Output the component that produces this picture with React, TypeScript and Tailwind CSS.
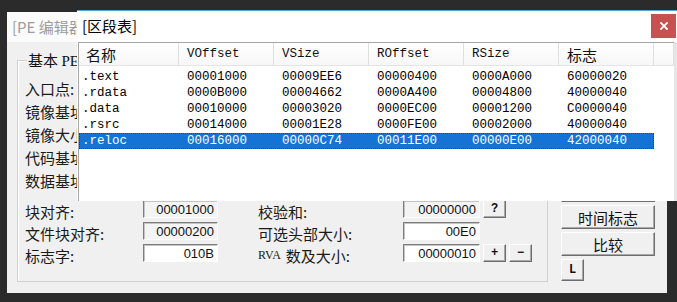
import React from "react";

const colW = ["w-[100px]", "w-[95px]", "w-[95px]", "w-[95px]", "w-[95px]", "w-[95px]"];

const rows = [
  [".text", "00001000", "00009EE6", "00000400", "0000A000", "60000020"],
  [".rdata", "0000B000", "00004662", "0000A400", "00004800", "40000040"],
  [".data", "00010000", "00003020", "0000EC00", "00001200", "C0000040"],
  [".rsrc", "00014000", "00001E28", "0000FE00", "00002000", "40000040"],
  [".reloc", "00016000", "00000C74", "00011E00", "00000E00", "42000040"],
];

const mono = "font-['Liberation_Mono','Noto_Sans_CJK_SC',monospace]";
const cjk = "font-['Noto_Sans_CJK_SC','Liberation_Sans',sans-serif]";

function Box({ value, gray }: { value: string; gray?: boolean }) {
  return (
    <div
      className={`h-[18px] flex items-center justify-end pr-[3px] border border-t-[#7d7d7d] border-l-[#7d7d7d] border-r-white border-b-white shadow-[inset_1px_1px_0_#c4c4c4] text-[13px] leading-none text-[#111] font-['Liberation_Sans',sans-serif] ${
        gray ? "bg-[#f4f4f4]" : "bg-white"
      } w-full`}
    >
      {value}
    </div>
  );
}

function SmallBtn({ label, tall }: { label: string; tall?: boolean }) {
  return (
    <div
      className={`w-[23px] ${tall ? "h-[22px]" : "h-[18px]"} flex items-center justify-center bg-[#f0f0f0] border border-t-white border-l-white border-r-[#6d6d6d] border-b-[#6d6d6d] shadow-[inset_-1px_-1px_0_#a8a8a8] text-[12px] leading-none text-[#111] font-['Liberation_Mono',monospace] font-bold`}
    >
      {label}
    </div>
  );
}

function BigBtn({ label }: { label: string }) {
  return (
    <div className={`w-[94px] h-[24px] flex items-center justify-center bg-[#f0f0f0] border border-t-white border-l-white border-r-[#6d6d6d] border-b-[#6d6d6d] shadow-[inset_-1px_-1px_0_#a8a8a8] text-[15px] leading-none text-[#111] ${cjk}`}>
      {label}
    </div>
  );
}

function TopRow({ label }: { label: string }) {
  return (
    <div className="flex h-[23px] items-center">
      <div className={`w-[118px] text-[15px] leading-none text-[#1a1a1a] ${cjk}`}>{label}</div>
      <div className="w-[75px]">
        <Box value="" />
      </div>
    </div>
  );
}

function BackWindow() {
  return (
    <div className="absolute left-[7px] top-[12px] w-[660px] h-[281px] bg-[#f0f0f0] flex flex-col">
      <div className={`h-[30px] bg-[#fbfbfb] flex items-center pl-[5px] text-[15px] text-[#9c9c9c] ${cjk}`}>
        [PE 编辑器]
      </div>
      <div className="flex flex-1 pl-[10px]">
        <div className="w-[531px] h-[222px] mt-[18px] border border-[#d0d0d0] shadow-[inset_1px_1px_0_#ffffff] flex flex-col pl-[7px]">
          <div className={`-mt-[11px] ml-[2px] w-fit px-[1px] bg-[#f0f0f0] text-[15px] leading-[20px] text-[#111] ${cjk}`}>
            基本 <span className="font-['Liberation_Serif',serif]">PE</span>
          </div>
          <div className="mt-[6px] flex flex-col">
            <TopRow label="入口点:" />
            <TopRow label="镜像基址:" />
            <TopRow label="镜像大小:" />
            <TopRow label="代码基址:" />
            <TopRow label="数据基址:" />
          </div>
          <div className="mt-[8px] flex flex-col">
            <div className="flex h-[22px] items-start">
              <div className={`w-[118px] h-[22px] flex items-center text-[15px] leading-none text-[#1a1a1a] ${cjk}`}>块对齐:</div>
              <div className="w-[75px]"><Box value="00001000" gray /></div>
              <div className={`ml-[40px] w-[145px] h-[22px] flex items-center text-[15px] leading-none text-[#1a1a1a] ${cjk}`}>校验和:</div>
              <div className="w-[77px]"><Box value="00000000" gray /></div>
              <div className="ml-[3px]"><SmallBtn label="?" /></div>
            </div>
            <div className="flex h-[22px] items-start">
              <div className={`w-[118px] h-[22px] flex items-center text-[15px] leading-none text-[#1a1a1a] ${cjk}`}>文件块对齐:</div>
              <div className="w-[75px]"><Box value="00000200" gray /></div>
              <div className={`ml-[40px] w-[145px] h-[22px] flex items-center text-[15px] leading-none text-[#1a1a1a] ${cjk}`}>可选头部大小:</div>
              <div className="w-[77px]"><Box value="00E0" /></div>
            </div>
            <div className="flex h-[22px] items-start">
              <div className={`w-[118px] h-[22px] flex items-center text-[15px] leading-none text-[#1a1a1a] ${cjk}`}>标志字:</div>
              <div className="w-[75px]"><Box value="010B" /></div>
              <div className={`ml-[40px] w-[145px] h-[22px] flex items-center text-[15px] leading-none text-[#1a1a1a] ${cjk}`}>
                <span className="font-['Liberation_Serif',serif] text-[12px] mr-[5px]">RVA</span>数及大小:
              </div>
              <div className="w-[77px]"><Box value="00000010" /></div>
              <div className="ml-[3px]"><SmallBtn label="+" /></div>
              <div className="ml-[3px]"><SmallBtn label="−" /></div>
            </div>
          </div>
        </div>
        <div className="ml-[13px] w-[94px] flex flex-col justify-end gap-[3px] pb-[12px]">
          <BigBtn label="区段" />
          <BigBtn label="时间标志" />
          <BigBtn label="比较" />
          <SmallBtn label="L" tall />
        </div>
      </div>
    </div>
  );
}

function Dialog() {
  return (
    <div className="absolute left-[77px] top-[10px] w-[600px] h-[191px] bg-white border-t border-[#5aa4dc] flex flex-col">
      <div className="h-[31px] flex items-start">
        <div className={`h-[31px] flex items-center pl-[5px] text-[15px] text-black ${cjk}`}>[区段表]</div>
        <div className="ml-auto mr-[1px] mt-[3px] w-[25px] h-[24px] bg-[#c75050] flex items-center justify-center">
          <svg width="8" height="8" viewBox="0 0 8 8">
            <path d="M1 1 L7 7 M7 1 L1 7" stroke="white" strokeWidth="1.8" strokeLinecap="square" />
          </svg>
        </div>
      </div>
      <div className="flex flex-1 pl-[1px]">
        <div className="flex-1 border-t border-l border-[#a5a5a5] flex flex-col">
          <div className="h-[23px] flex border-b border-[#e5e5e5] bg-gradient-to-b from-white to-[#f7f7f7]">
            {["名称", "VOffset", "VSize", "ROffset", "RSize", "标志"].map((h, i) => (
              <div
                key={h}
                className={`${colW[i]} h-full border-r border-[#e0e0e0] flex items-center ${
                  i === 0 ? "pl-[7px]" : "pl-[8px]"
                } ${i === 0 || i === 5 ? `text-[15px] ${cjk}` : `text-[12.5px] ${mono}`} text-[#111] leading-none`}
              >
                {h}
              </div>
            ))}
            <div className="flex-1 border-r border-[#e0e0e0]" />
          </div>
          <div className="pt-[3px] flex flex-col">
            {rows.map((r, ri) => {
              const sel = ri === 4;
              return (
                <div
                  key={r[0]}
                  className={`flex h-[16px] w-[575px] items-center ${
                    sel ? "bg-[#1473d4] text-white outline-1 outline-dotted outline-[#3a3a3a] -outline-offset-1" : "text-black"
                  }`}
                >
                  {r.map((c, ci) => (
                    <div
                      key={ci}
                      className={`${colW[ci]} ${ci === 0 ? "pl-[3px]" : "pl-[8px]"} text-[12.5px] leading-none ${mono}`}
                    >
                      {c}
                    </div>
                  ))}
                </div>
              );
            })}
          </div>
        </div>
        <div className="w-[3px] bg-[#e6e6e6]" />
      </div>
    </div>
  );
}

export default function App() {
  return (
    <div className="relative w-[677px] h-[302px] overflow-hidden bg-[#2b2b2b] font-['Liberation_Sans','Noto_Sans_CJK_SC',sans-serif]">
      <BackWindow />
      <Dialog />
    </div>
  );
}
